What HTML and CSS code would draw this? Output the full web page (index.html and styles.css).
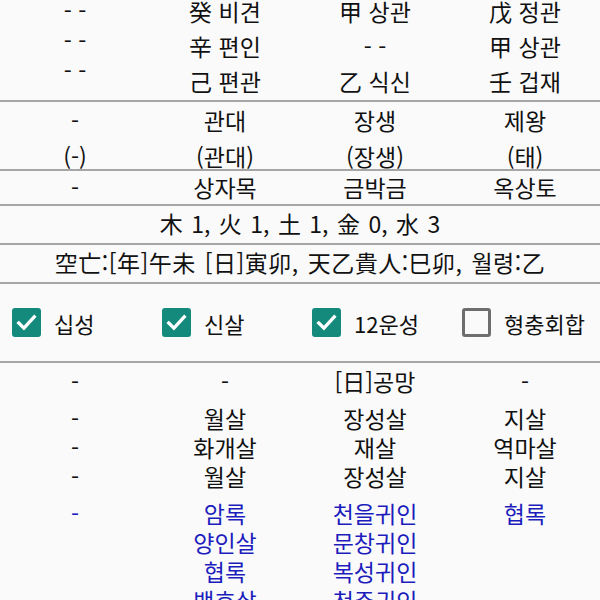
FILE: index.html
```html
<!DOCTYPE html>
<html lang="ko">
<head>
<meta charset="utf-8">
<link rel="stylesheet" href="styles.css">
</head>
<body>
<div class="page">
  <section class="row row-a">
    <div class="cell dashes"><div>- -</div><div>- -</div><div>- -</div></div>
    <div class="cell stems"><div>癸 비견</div><div>辛 편인</div><div>己 편관</div></div>
    <div class="cell stems"><div>甲 상관</div><div>- -</div><div>乙 식신</div></div>
    <div class="cell stems"><div>戊 정관</div><div>甲 상관</div><div>壬 겁재</div></div>
  </section>
  <section class="row row-b">
    <div class="cell"><div>-</div><div>(-)</div></div>
    <div class="cell"><div>관대</div><div>(관대)</div></div>
    <div class="cell"><div>장생</div><div>(장생)</div></div>
    <div class="cell"><div>제왕</div><div>(태)</div></div>
  </section>
  <section class="row row-c">
    <div class="cell">-</div>
    <div class="cell">상자목</div>
    <div class="cell">금박금</div>
    <div class="cell">옥상토</div>
  </section>
  <section class="line line-d">木 1, 火 1, 土 1, 金 0, 水 3</section>
  <section class="line line-e">空亡:[年]午未 [日]寅卯, 天乙貴人:巳卯, 월령:乙</section>
  <section class="checks">
    <label class="check"><span class="box on"><svg viewBox="0 0 28 28"><path d="M6.5 14.5 L11.5 19.5 L21.5 8.5" /></svg></span><span class="lbl">십성</span></label>
    <label class="check"><span class="box on"><svg viewBox="0 0 28 28"><path d="M6.5 14.5 L11.5 19.5 L21.5 8.5" /></svg></span><span class="lbl">신살</span></label>
    <label class="check"><span class="box on"><svg viewBox="0 0 28 28"><path d="M6.5 14.5 L11.5 19.5 L21.5 8.5" /></svg></span><span class="lbl">12운성</span></label>
    <label class="check"><span class="box off"></span><span class="lbl">형충회합</span></label>
  </section>
  <section class="shinsal">
    <div class="grp">
      <div class="cell">-</div>
      <div class="cell">-</div>
      <div class="cell">[日]공망</div>
      <div class="cell">-</div>
    </div>
    <div class="grp">
      <div class="cell"><div>-</div><div>-</div><div>-</div></div>
      <div class="cell"><div>월살</div><div>화개살</div><div>월살</div></div>
      <div class="cell"><div>장성살</div><div>재살</div><div>장성살</div></div>
      <div class="cell"><div>지살</div><div>역마살</div><div>지살</div></div>
    </div>
    <div class="grp blue">
      <div class="cell"><div>-</div></div>
      <div class="cell"><div>암록</div><div>양인살</div><div>협록</div><div>백호살</div></div>
      <div class="cell"><div>천을귀인</div><div>문창귀인</div><div>복성귀인</div><div>천주귀인</div></div>
      <div class="cell"><div>협록</div></div>
    </div>
  </section>
</div>
</body>
</html>
```
FILE: styles.css
```css
html, body {
  margin: 0;
  padding: 0;
  background: #fafafa;
}
body {
  font-family: "Noto Sans CJK KR", "Noto Sans", sans-serif;
  font-size: 23px;
  color: #111111;
  width: 600px;
  height: 600px;
  overflow: hidden;
}
.page {
  width: 600px;
}
.row {
  display: grid;
  grid-template-columns: repeat(4, 1fr);
  text-align: center;
  border-bottom: 2px solid #a6a6a6;
}
.row-a {
  height: 100px;
  line-height: 35px;
}
.row-a .stems {
  margin-top: -6px;
}
.row-a .dashes {
  line-height: 30px;
  margin-top: -5px;
}
.row-b {
  height: 67px;
  line-height: 36px;
}
.row-c {
  height: 33px;
  line-height: 33px;
}
.line {
  text-align: center;
  border-bottom: 2px solid #a6a6a6;
  height: 37px;
  line-height: 35px;
}
.line-d {
  word-spacing: 2px;
}
.line-e {
  letter-spacing: 0.5px;
  word-spacing: 2px;
}
.checks {
  display: grid;
  grid-template-columns: repeat(4, 1fr);
  height: 77px;
  align-items: center;
  border-bottom: 2px solid #a6a6a6;
}
.check {
  display: flex;
  align-items: center;
  padding-left: 12px;
}
.box {
  width: 29px;
  height: 29px;
  border-radius: 3px;
  box-sizing: border-box;
  display: flex;
  align-items: center;
  justify-content: center;
}
.box.on {
  background: #138a7c;
}
.box.off {
  border: 3px solid #6e6e6e;
}
.box svg {
  width: 29px;
  height: 29px;
}
.box svg path {
  fill: none;
  stroke: #ffffff;
  stroke-width: 3.2;
  stroke-linecap: square;
  stroke-linejoin: miter;
}
.lbl {
  margin-left: 13px;
  font-size: 22px;
}
.shinsal {
  padding-top: 4px;
}
.grp {
  display: grid;
  grid-template-columns: repeat(4, 1fr);
  text-align: center;
  line-height: 29px;
  padding-bottom: 8px;
}
.grp.blue {
  color: #1d1dbd;
}
```
